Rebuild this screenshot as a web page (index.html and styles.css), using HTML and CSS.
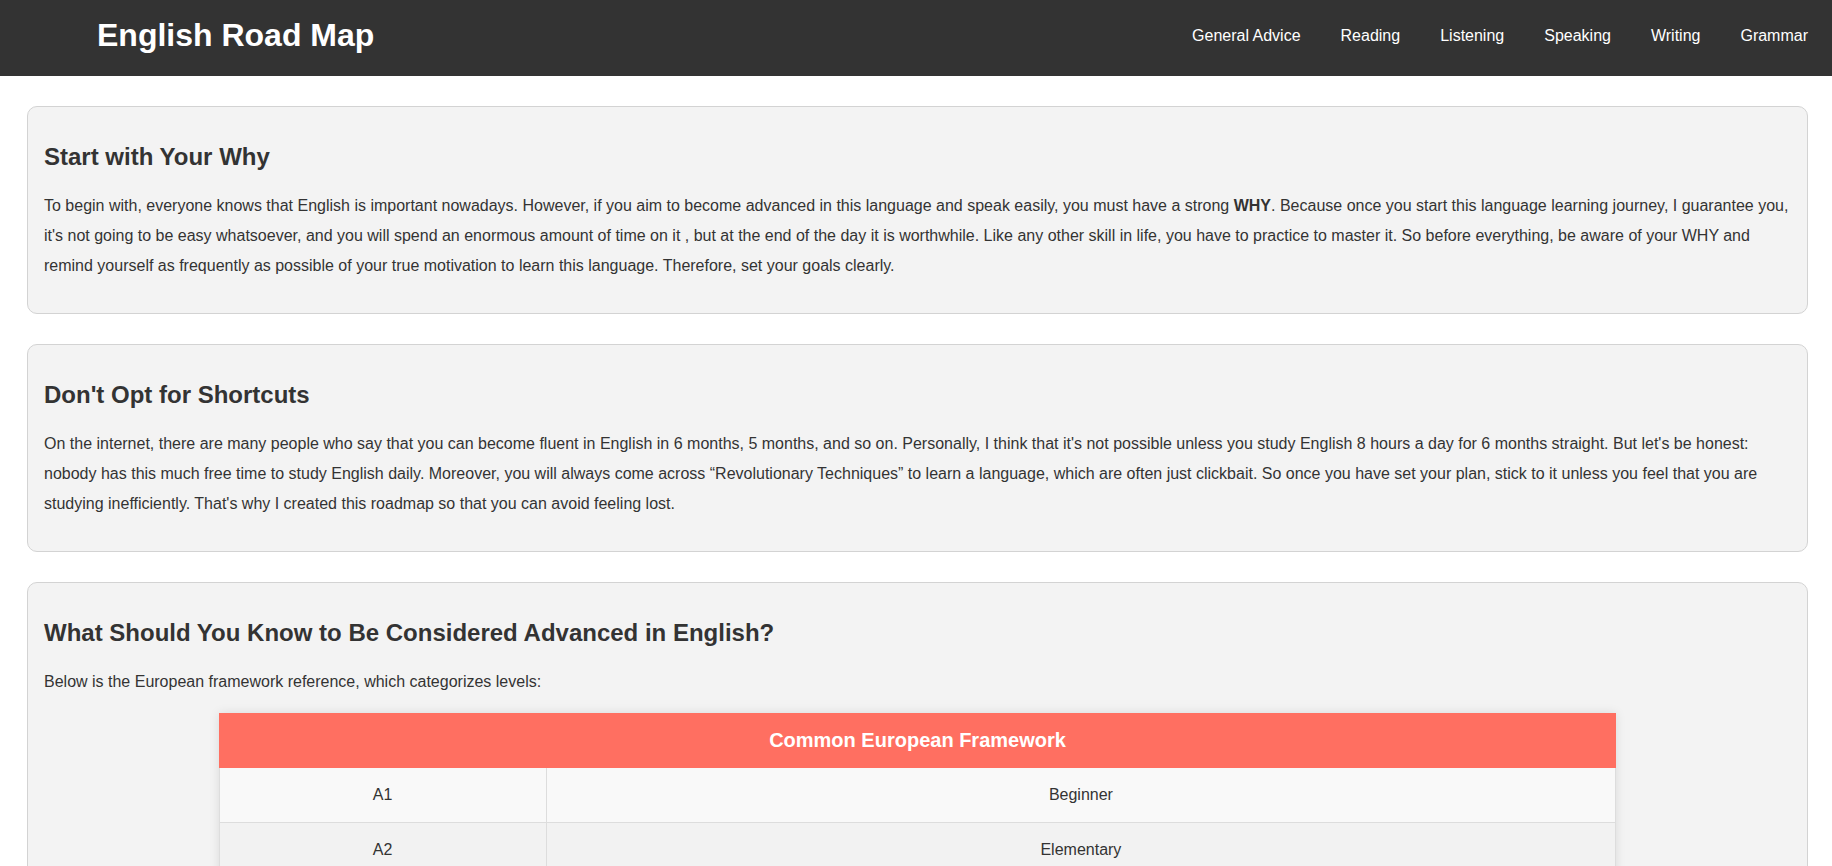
FILE: index.html
```html
<!DOCTYPE html>
<html lang="en">
<head>
<meta charset="utf-8">
<title>English Road Map</title>
<link rel="stylesheet" href="styles.css">
</head>
<body>
<header class="site-header">
  <h1 class="logo">English Road Map</h1>
  <nav class="nav">
    <a href="#" class="nav-link">General Advice</a>
    <a href="#" class="nav-link">Reading</a>
    <a href="#" class="nav-link">Listening</a>
    <a href="#" class="nav-link">Speaking</a>
    <a href="#" class="nav-link">Writing</a>
    <a href="#" class="nav-link">Grammar</a>
  </nav>
</header>
<main class="content">
  <section class="card">
    <h2 class="card-title">Start with Your Why</h2>
    <p class="card-text">To begin with, everyone knows that English is important nowadays. However, if you aim to become advanced in this language and speak easily, you must have a strong <strong>WHY</strong>. Because once you start this language learning journey, I guarantee you, it's not going to be easy whatsoever, and you will spend an enormous amount of time on it , but at the end of the day it is worthwhile. Like any other skill in life, you have to practice to master it. So before everything, be aware of your WHY and remind yourself as frequently as possible of your true motivation to learn this language. Therefore, set your goals clearly.</p>
  </section>
  <section class="card">
    <h2 class="card-title">Don't Opt for Shortcuts</h2>
    <p class="card-text">On the internet, there are many people who say that you can become fluent in English in 6 months, 5 months, and so on. Personally, I think that it's not possible unless you study English 8 hours a day for 6 months straight. But let's be honest: nobody has this much free time to study English daily. Moreover, you will always come across “Revolutionary Techniques” to learn a language, which are often just clickbait. So once you have set your plan, stick to it unless you feel that you are studying inefficiently. That's why I created this roadmap so that you can avoid feeling lost.</p>
  </section>
  <section class="card">
    <h2 class="card-title">What Should You Know to Be Considered Advanced in English?</h2>
    <p class="card-text">Below is the European framework reference, which categorizes levels:</p>
    <table class="levels">
      <thead>
        <tr><th colspan="2" class="levels-head">Common European Framework</th></tr>
      </thead>
      <tbody>
        <tr><td class="level-code">A1</td><td>Beginner</td></tr>
        <tr><td class="level-code">A2</td><td>Elementary</td></tr>
        <tr><td class="level-code">B1</td><td>Intermediate</td></tr>
        <tr><td class="level-code">B2</td><td>Upper Intermediate</td></tr>
        <tr><td class="level-code">C1</td><td>Advanced</td></tr>
        <tr><td class="level-code">C2</td><td>Proficiency</td></tr>
      </tbody>
    </table>
  </section>
</main>
</body>
</html>
```
FILE: styles.css
```css
body {
  margin: 0;
  font-family: "Liberation Sans", Arial, sans-serif;
  color: #333;
  background: #fff;
}

.site-header {
  background: #333;
  color: #fff;
  height: 76px;
  box-sizing: border-box;
  display: flex;
  align-items: center;
  justify-content: space-between;
  padding: 0 24px 6px 97px;
}

.logo {
  margin: 0;
  font-size: 32px;
  font-weight: bold;
}

.nav {
  display: flex;
  gap: 40px;
  padding-top: 2px;
}

.nav-link {
  color: #fff;
  text-decoration: none;
  font-size: 16px;
}

.content {
  padding: 30px 24px 1px 27px;
}

.card {
  background: #f3f3f3;
  border: 1px solid #d3d3d3;
  border-radius: 10px;
  padding: 16px;
  margin-bottom: 30px;
}

.card-title {
  font-size: 24px;
  font-weight: bold;
  margin: 20px 0;
}

.card-text {
  font-size: 16px;
  line-height: 30px;
  margin: 16px 0;
}

.levels {
  width: 80%;
  margin: 0 auto 16px;
  border-collapse: collapse;
  background: #f9f9f9;
  box-shadow: 0 0 10px rgba(0, 0, 0, 0.1);
}

.levels-head {
  background: #ff6f61;
  color: #fff;
  font-size: 20px;
  font-weight: bold;
  line-height: 29px;
  padding: 12px;
  border: 1px solid #ff6f61;
}

.levels td {
  border: 1px solid #ddd;
  padding: 12px;
  line-height: 30px;
  font-size: 16px;
  text-align: center;
}

.levels .level-code {
  width: 23.4%;
}

.levels tbody tr:nth-child(even) {
  background: #f2f2f2;
}
```
